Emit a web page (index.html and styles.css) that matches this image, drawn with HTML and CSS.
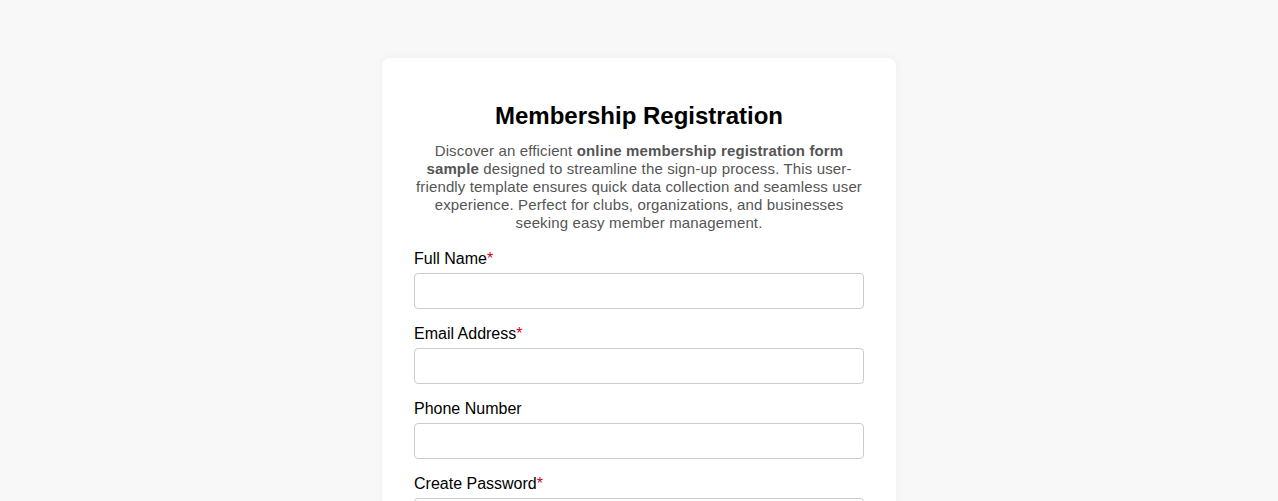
FILE: index.html
```html
<!DOCTYPE html>
<html lang="en">
<head>
<meta charset="utf-8">
<title>Membership Registration</title>
<link rel="stylesheet" href="styles.css">
</head>
<body>
<main class="card">
  <h2 class="title">Membership Registration</h2>
  <p class="intro">Discover an efficient <strong>online membership registration form sample</strong> designed to streamline the sign-up process. This user-friendly template ensures quick data collection and seamless user experience. Perfect for clubs, organizations, and businesses seeking easy member management.</p>
  <form class="form">
    <label class="label" for="name">Full Name<span class="req">*</span></label>
    <input class="input" id="name" type="text">
    <label class="label" for="email">Email Address<span class="req">*</span></label>
    <input class="input" id="email" type="email">
    <label class="label" for="phone">Phone Number</label>
    <input class="input" id="phone" type="tel">
    <label class="label" for="pw">Create Password<span class="req">*</span></label>
    <input class="input" id="pw" type="password">
  </form>
</main>
</body>
</html>
```
FILE: styles.css
```css
html, body {
  margin: 0;
  padding: 0;
}
body {
  background: #f8f8f8;
  font-family: "Liberation Sans", Arial, sans-serif;
  color: #000;
  padding: 58px 0 40px;
}
.card {
  box-sizing: border-box;
  width: 514px;
  margin: 0 auto;
  background: #fff;
  border-radius: 8px;
  box-shadow: 0 0 10px rgba(0, 0, 0, 0.05);
  padding: 32px;
}
.title {
  margin: 12px 0 12px;
  text-align: center;
  font-size: 24px;
  font-weight: bold;
}
.intro {
  margin: 0 0 18px;
  text-align: center;
  font-size: 15px;
  letter-spacing: 0.14px;
  line-height: 18px;
  color: #555;
}
.form {
  display: flex;
  flex-direction: column;
}
.label {
  font-size: 16px;
  margin-bottom: 5px;
}
.req {
  color: #d0021b;
}
.input {
  box-sizing: border-box;
  height: 36px;
  width: 100%;
  margin: 0 0 16px;
  border: 1px solid #ccc;
  border-radius: 4px;
  padding: 8px;
  font-size: 14px;
  background: #fff;
}
```
